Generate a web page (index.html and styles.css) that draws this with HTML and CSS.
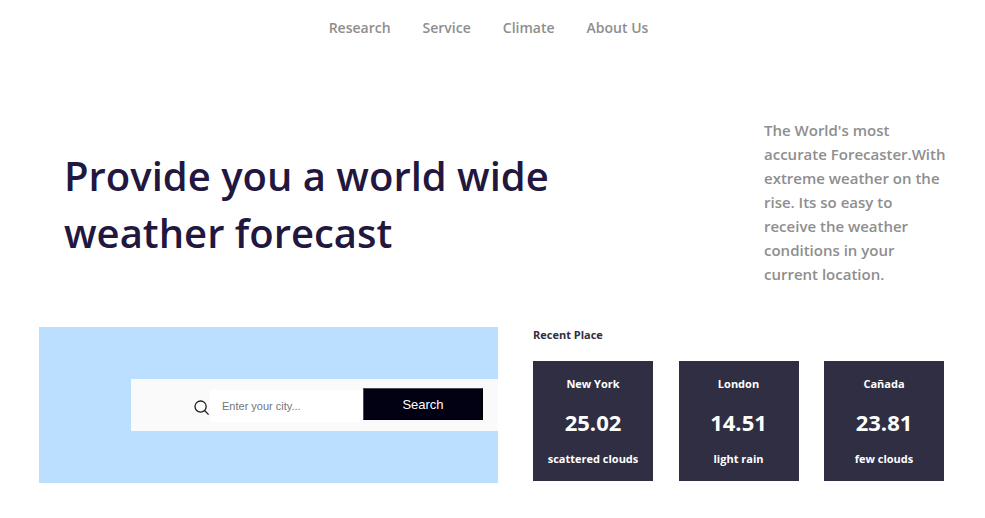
FILE: index.html
```
<!DOCTYPE html>
<html lang="en">
<head>
<meta charset="utf-8">
<title>Weather Forecast</title>
<link rel="stylesheet" href="styles.css">
</head>
<body>
<nav class="nav" aria-label="Main">
  <a href="#research">Research</a>
  <a href="#service">Service</a>
  <a href="#climate">Climate</a>
  <a href="#about">About Us</a>
</nav>
<main class="page">
  <section class="hero">
    <h1 class="title">Provide you a world wide weather forecast</h1>
    <p class="intro">The World's most accurate Forecaster.With extreme weather on the rise. Its so easy to receive the weather conditions in your current location.</p>
  </section>
  <section class="lower">
    <div class="panel">
      <form class="search">
        <label class="search-icon" for="city" aria-label="City">
          <svg width="16" height="16" viewBox="0 0 16 16" fill="none" stroke="#1c1c1c" stroke-width="1.3"><circle cx="6.6" cy="6.6" r="5.6"/><path d="M10.8 10.8 14.6 14.6"/></svg>
        </label>
        <input class="city" id="city" type="text" placeholder="Enter your city...">
        <button class="submit" type="submit">Search</button>
      </form>
    </div>
    <div class="recent">
      <h2 class="recent-title">Recent Place</h2>
      <div class="cards">
        <article class="card"><h3>New York</h3><p class="temp">25.02</p><p>scattered clouds</p></article>
        <article class="card"><h3>London</h3><p class="temp">14.51</p><p>light rain</p></article>
        <article class="card"><h3>Cañada</h3><p class="temp">23.81</p><p>few clouds</p></article>
      </div>
    </div>
  </section>
</main>
</body>
</html>
```
FILE: styles.css
```
* { box-sizing: border-box; }
body {
  margin: 0;
  background: #fff;
  font-family: "Segoe UI", "Open Sans", "Noto Sans", sans-serif;
}
h1, h2, h3, p { margin: 0; }
.nav {
  display: flex;
  justify-content: center;
  gap: 32px;
  padding: 16px 8px 0 0;
}
.nav a {
  color: #8e8e8e;
  font-size: 14px;
  font-weight: 600;
  line-height: 24px;
  text-decoration: none;
}
.page { padding: 78px 37px 32px 39px; }
.hero {
  display: flex;
  align-items: center;
  justify-content: space-between;
  padding-left: 25px;
}
.title {
  max-width: 520px;
  margin-top: 4px;
  color: #22173f;
  font-size: 40px;
  font-weight: 600;
  line-height: 57px;
}
.intro {
  flex: 0 0 184px;
  color: #8e8e8e;
  font-size: 15px;
  font-weight: 600;
  line-height: 24px;
}
.lower {
  display: grid;
  grid-template-columns: 459fr 411fr;
  column-gap: 35px;
  margin: 41px 4px 0 0;
}
.panel {
  display: flex;
  align-items: center;
  padding-left: 20%;
  background: #bbdfff;
}
.search {
  flex: 1;
  display: flex;
  align-items: center;
  justify-content: flex-end;
  height: 52px;
  padding-right: 15px;
  background: #fafafa;
}
.search-icon { height: 16px; margin-top: 6px; }
.search-icon svg { display: block; }
.city {
  width: 153px;
  height: 32px;
  margin-top: 2px;
  padding: 0 12px;
  border: 0;
  background: #fff;
  font: 11px/16px "Liberation Sans", Arial, sans-serif;
}
.city::placeholder { color: #757575; }
.submit {
  width: 120px;
  height: 32px;
  margin-bottom: 2px;
  padding: 2px 0 0;
  border: 1px outset #000;
  border-color: #4c4c4c #000 #000 #4c4c4c;
  background: #020013;
  color: #fff;
  font: 13px/16px "Liberation Sans", Arial, sans-serif;
}
.recent-title {
  color: #2f2e43;
  font-size: 11px;
  font-weight: 700;
  line-height: 16px;
}
.cards {
  display: flex;
  justify-content: space-between;
  margin: 18px 0 2px;
}
.card {
  width: 120px;
  padding: 15px 0 14px;
  background: #2f2e43;
  color: #fff;
  text-align: center;
  font-size: 11px;
  font-weight: 700;
  line-height: 16px;
}
.card h3 { font-size: 11px; }
.card .temp {
  margin: 14px 0 13px;
  font-size: 22px;
  line-height: 32px;
}
```
